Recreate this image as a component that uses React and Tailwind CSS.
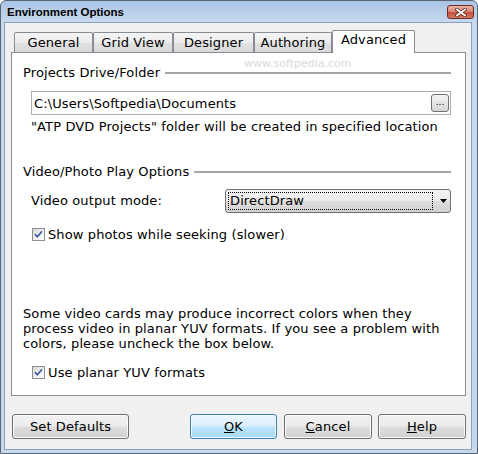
import React from "react";

function Check() {
  return (
    <div className="w-[13px] h-[13px] shrink-0 border border-[#8e8f8f] bg-[linear-gradient(135deg,#d4d4d4,#f4f4f4_65%,#ffffff)] flex items-center justify-center">
      <svg width="11" height="11" viewBox="0 0 11 11">
        <path d="M2 5.2 L4.4 7.8 L9 2.2" fill="none" stroke="#eef2fa" strokeWidth="3.2" strokeLinejoin="round" />
        <path d="M2 5.2 L4.4 7.8 L9 2.2" fill="none" stroke="#3b5aa3" strokeWidth="1.7" />
      </svg>
    </div>
  );
}

function GroupHeader({ children }) {
  return (
    <div className="flex items-center h-[16px]">
      <span className="whitespace-nowrap">{children}</span>
      <div className="flex-1 ml-[5px] h-[2px] bg-[#a6a6a6]" />
    </div>
  );
}

function Tab({ children, className }) {
  return (
    <div
      className={`mt-[2px] h-[20px] flex justify-center pt-[2px] border border-b-0 border-[#898c95] rounded-t-[2px] bg-[linear-gradient(#f5f5f5,#ececec_50%,#e1e1e1_50%,#dadada)] whitespace-nowrap ${className}`}
    >
      {children}
    </div>
  );
}

function Btn({ children, className }) {
  return (
    <div
      className={`h-[25px] rounded-[3px] border border-[#707070] bg-[linear-gradient(#f2f2f2,#ebebeb_48%,#dddddd_52%,#d1d1d1)] shadow-[inset_0_0_0_1px_#fafafa] flex items-center justify-center pt-[1px] ${className}`}
    >
      {children}
    </div>
  );
}

export default function App() {
  return (
    <div className="w-[478px] h-[454px] bg-white font-['DejaVu_Sans',sans-serif] text-[13px] leading-[16px] tracking-[0.12px] text-black">
      <div className="relative w-full h-full flex flex-col rounded-t-[6px] border border-[#5a6676] bg-[linear-gradient(#a9c4e4,#c9daee_22px,#c7d8ec)] overflow-hidden">
        {/* Title bar */}
        <div className="h-[21px] shrink-0 flex items-start justify-between pl-[6px] pr-[3px]">
          <span className="mt-[5px] font-['Liberation_Sans',sans-serif] font-bold text-[11.5px] leading-[13px] tracking-normal whitespace-nowrap">
            Environment Options
          </span>
          <div className="mt-[4px] w-[27px] h-[14px] rounded-[3px] border border-[#6c2c24] bg-[linear-gradient(#e8b0a4,#d98a79_45%,#c5503a_55%,#d37a63)] flex items-center justify-center">
            <svg width="12" height="9" viewBox="0 0 12 9">
              <path d="M2 1.5 L10 7.5 M10 1.5 L2 7.5" stroke="#5a2219" strokeWidth="3.4" strokeLinecap="square" />
              <path d="M2 1.5 L10 7.5 M10 1.5 L2 7.5" stroke="#ffffff" strokeWidth="1.8" strokeLinecap="square" />
            </svg>
          </div>
        </div>

        {/* Body */}
        <div className="flex-1 ml-[3px] mr-[5px] mb-[3px] border border-[#8aa0bb] bg-[#f0f0f0] flex flex-col pl-[6px] pr-[5px] pt-[7px]">
          {/* Tabs */}
          <div className="h-[22px] flex items-start pl-[3px]">
            <Tab className="w-[79px]">General</Tab>
            <Tab className="w-[80px]">Grid View</Tab>
            <Tab className="w-[81px]">Designer</Tab>
            <Tab className="w-[78px]">Authoring</Tab>
            <div className="relative z-10 w-[83px] h-[23px] bg-white border border-b-0 border-[#898c95] rounded-t-[2px] flex justify-center pt-[1px] whitespace-nowrap">
              Advanced
            </div>
          </div>

          {/* Panel */}
          <div className="h-[344px] border border-[#898c95] bg-white pl-[11px] pr-[14px] flex flex-col">
            <div className="mt-[12px]">
              <GroupHeader>Projects Drive/Folder</GroupHeader>
            </div>
            <div className="mt-[10px] ml-[8px] h-[24px] border border-[#abadb3] flex items-center pl-[2px] pr-[1px]">
              <span className="flex-1 pt-[2px] whitespace-nowrap">C:\Users\Softpedia\Documents</span>
              <div className="w-[18px] h-[18px] rounded-[3px] border border-[#707070] bg-[linear-gradient(#f4f4f4,#e6e6e6_50%,#d6d6d6)] flex items-center justify-center">
                <span className="text-[9px] leading-[9px] tracking-normal -mt-[2px]">...</span>
              </div>
            </div>
            <div className="mt-[4px] ml-[8px] whitespace-nowrap">
              "ATP DVD Projects" folder will be created in specified location
            </div>

            <div className="mt-[29px]">
              <GroupHeader>Video/Photo Play Options</GroupHeader>
            </div>
            <div className="mt-[9px] ml-[8px] h-[24px] flex items-center">
              <span className="w-[194px] whitespace-nowrap">Video output mode:</span>
              <div className="flex-1 h-[24px] rounded-[3px] border border-[#707070] bg-[linear-gradient(#f2f2f2,#ebebeb_48%,#dddddd_52%,#d1d1d1)] flex items-stretch p-[2px]">
                <div className="flex-1 border border-dotted border-black flex items-center pl-[1px]">
                  DirectDraw
                </div>
                <div className="w-[15px] flex items-center pl-[7px]">
                  <svg width="7" height="4" viewBox="0 0 7 4">
                    <path d="M0 0 L7 0 L3.5 4 Z" fill="#000" />
                  </svg>
                </div>
              </div>
            </div>
            <div className="mt-[14px] ml-[9px] flex items-start">
              <div className="mt-[1px]">
                <Check />
              </div>
              <span className="ml-[3px] whitespace-nowrap">Show photos while seeking (slower)</span>
            </div>

            <div className="mt-[63px] leading-[15px] whitespace-nowrap">
              Some video cards may produce incorrect colors when they
              <br />
              process video in planar YUV formats. If you see a problem with
              <br />
              colors, please uncheck the box below.
            </div>
            <div className="mt-[14px] ml-[9px] flex items-start">
              <div className="mt-[1px]">
                <Check />
              </div>
              <span className="ml-[3px] whitespace-nowrap">Use planar YUV formats</span>
            </div>
          </div>

          {/* Buttons */}
          <div className="mt-[18px] flex">
            <Btn className="ml-[1px] w-[117px]">Set Defaults</Btn>
            <div className="ml-[61px] w-[87px] h-[25px] rounded-[3px] border border-[#3c7fb1] bg-[linear-gradient(#eaf6fd,#d9f0fc_48%,#bee6fd_52%,#a7d9f5)] shadow-[inset_0_0_0_1px_#f2fafe] flex items-center justify-center pt-[1px]">
              <span>
                <span className="underline">O</span>K
              </span>
            </div>
            <Btn className="ml-[7px] w-[88px]">
              <span>
                <span className="underline">C</span>ancel
              </span>
            </Btn>
            <Btn className="ml-[6px] w-[88px]">
              <span>
                <span className="underline">H</span>elp
              </span>
            </Btn>
          </div>
        </div>

        {/* Watermark */}
        <div className="absolute left-[243px] top-[57px] pointer-events-none text-[11px] leading-[12px] tracking-normal text-[#dadada] whitespace-nowrap">
          www.softpedia.com
        </div>
      </div>
    </div>
  );
}
